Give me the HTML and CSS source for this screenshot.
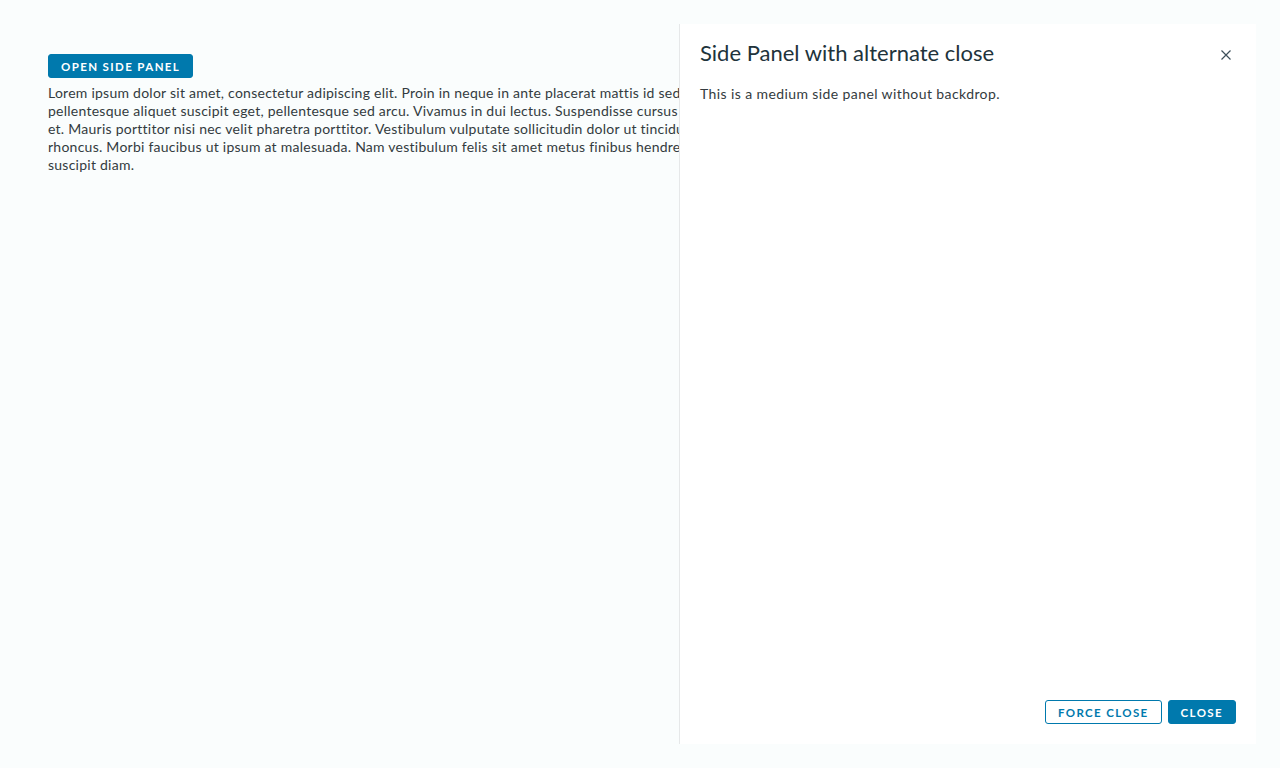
FILE: index.html
```html
<!DOCTYPE html>
<html lang="en">
<head>
<meta charset="utf-8">
<title>Side Panel</title>
<link rel="stylesheet" href="styles.css">
</head>
<body>
<main class="content">
  <button class="btn btn-primary">Open side panel</button>
  <p class="lorem">Lorem ipsum dolor sit amet, consectetur adipiscing elit. Proin in neque in ante placerat mattis id sed quam. Proin rhoncus lacus et tempor dignissim. Vivamus sem quam,<br>pellentesque aliquet suscipit eget, pellentesque sed arcu. Vivamus in dui lectus. Suspendisse cursus est ac nisl imperdiet viverra. Aenean sagittis nibh lacus, in eleifend urna ultrices<br>et. Mauris porttitor nisi nec velit pharetra porttitor. Vestibulum vulputate sollicitudin dolor ut tincidunt. Phasellus vitae blandit felis. Nullam posuere ipsum tincidunt velit pellentesque<br>rhoncus. Morbi faucibus ut ipsum at malesuada. Nam vestibulum felis sit amet metus finibus hendrerit. Fusce faucibus odio eget ex vulputate rhoncus. Fusce nec aliquam leo, in<br>suscipit diam.</p>
</main>
<aside class="side-panel">
  <header class="panel-header">
    <h3 class="panel-title">Side Panel with alternate close</h3>
    <button class="panel-close" aria-label="Close">
      <svg width="12" height="12" viewBox="0 0 12 12"><path d="M1.5 1.5 L10.5 10.5 M10.5 1.5 L1.5 10.5" stroke="#3d4f5a" stroke-width="1.2" fill="none"/></svg>
    </button>
  </header>
  <div class="panel-body">
    <p>This is a medium side panel without backdrop.</p>
  </div>
  <footer class="panel-footer">
    <button class="btn btn-outline">Force close</button>
    <button class="btn btn-primary">Close</button>
  </footer>
</aside>
</body>
</html>
```
FILE: styles.css
```css
html, body {
  margin: 0;
  padding: 0;
  height: 100%;
}
body {
  background: #fafdfd;
  font-family: Lato, "Liberation Sans", sans-serif;
  color: #333b40;
  overflow: hidden;
}
.content {
  padding: 54px 48px 0 48px;
}
.btn {
  display: inline-flex;
  align-items: center;
  justify-content: center;
  height: 24px;
  padding: 0 12px;
  border-radius: 3px;
  font-family: inherit;
  font-size: 11.5px;
  font-weight: 700;
  letter-spacing: 0.12em;
  text-transform: uppercase;
  cursor: pointer;
  box-sizing: border-box;
}
.btn-primary {
  background: #0079ad;
  color: #fff;
  border: 1px solid #0079ad;
}
.btn-outline {
  background: #fff;
  color: #0079ad;
  border: 1px solid #0079ad;
}
.lorem {
  margin: 6px 0 0 0;
  font-size: 14px;
  line-height: 18px;
  letter-spacing: 0.25px;
  white-space: nowrap;
  color: #333b40;
}
.side-panel {
  position: absolute;
  top: 24px;
  left: 679px;
  width: 577px;
  height: 720px;
  background: #fff;
  border-left: 1px solid #e6e8e9;
  box-sizing: border-box;
  display: flex;
  flex-direction: column;
  padding: 17px 20px 20px 20px;
}
.panel-header {
  display: flex;
  align-items: center;
  justify-content: space-between;
  height: 24px;
}
.panel-title {
  margin: 0;
  font-size: 22px;
  font-weight: 400;
  color: #21333b;
  line-height: 24px;
}
.panel-close {
  background: none;
  border: 0;
  padding: 0;
  margin-right: 4px;
  margin-top: 4px;
  width: 12px;
  height: 12px;
  display: flex;
  cursor: pointer;
}
.panel-body {
  flex: 1;
  padding-top: 20px;
}
.panel-body p {
  margin: 0;
  font-size: 14px;
  line-height: 18px;
  letter-spacing: 0.4px;
  color: #333b40;
}
.panel-footer {
  display: flex;
  justify-content: flex-end;
  gap: 6px;
}
```
